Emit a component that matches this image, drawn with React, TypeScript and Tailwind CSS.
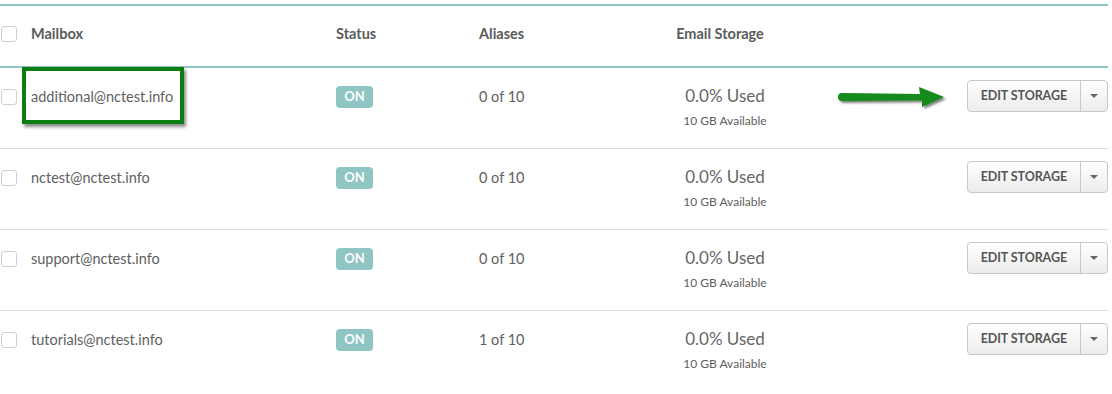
import React from 'react';

const mailboxes = [
  { email: 'additional@nctest.info', aliases: '0 of 10' },
  { email: 'nctest@nctest.info', aliases: '0 of 10' },
  { email: 'support@nctest.info', aliases: '0 of 10' },
  { email: 'tutorials@nctest.info', aliases: '1 of 10' },
];

const cols = 'grid grid-cols-[31px_305px_143px_166px_160px_1fr]';

const Checkbox: React.FC = () => (
  <span className="block w-[16px] h-[16px] ml-[1px] rounded-[3px] border border-[#cfcfcf] bg-white" />
);

const EditButton: React.FC = () => (
  <div className="flex h-[32px] rounded-[4px] border border-[#c8c8c8] bg-gradient-to-b from-white to-[#ececec] text-[#555]">
    <button className="px-[13px] text-[12.5px] font-bold tracking-[-0.1px] border-r border-[#c8c8c8]">
      EDIT STORAGE
    </button>
    <button className="w-[26px] flex items-center justify-center">
      <svg width="8" height="4" viewBox="0 0 8 4">
        <path d="M0 0h8L4 4z" fill="#666" />
      </svg>
    </button>
  </div>
);

export default function App() {
  return (
    <div className="w-[1112px] h-[394px] bg-white pt-[4px] pr-[4px] font-['Lato','Liberation_Sans',sans-serif] text-[#606060] relative">
      <div className="border-t-2 border-[#8fc5c1]">
        {/* Header */}
        <div className={`${cols} h-[62px] pb-[4px] items-center border-b-2 border-[#8fc5c1] text-[14.5px] font-bold text-[#5b5b5b]`}>
          <Checkbox />
          <span>Mailbox</span>
          <span>Status</span>
          <span>Aliases</span>
          <span className="text-center pr-[10px]">Email Storage</span>
          <span />
        </div>

        {/* Rows */}
        {mailboxes.map((m, i) => (
          <div
            key={m.email}
            className={`${cols} h-[81px] pt-[13px] ${i < mailboxes.length - 1 ? 'border-b border-[#dcdcdc]' : ''}`}
          >
            <div className="h-[32px] flex items-center"><Checkbox /></div>
            <div className="h-[32px] flex items-center text-[14.5px]">{m.email}</div>
            <div className="h-[32px] flex items-center">
              <span className="h-[22px] w-[37px] rounded-[4px] bg-[#8fc5c2] text-white text-[13px] font-bold flex items-center justify-center">
                ON
              </span>
            </div>
            <div className="h-[32px] flex items-center text-[14.5px]">{m.aliases}</div>
            <div className="flex flex-col items-center">
              <span className="h-[30px] flex items-center text-[17px] text-[#666]">0.0% Used</span>
              <span className="text-[12px] leading-[14px] mt-[3px]">10 GB Available</span>
            </div>
            <div className="flex justify-end -mt-[1px]">
              <EditButton />
            </div>
          </div>
        ))}
      </div>

      {/* Annotation: highlight box */}
      <div className="absolute left-[22px] top-[67px] w-[162px] h-[57px] border-[4px] border-[#0b7d12] shadow-[2px_3px_3px_rgba(0,0,0,0.45)] pointer-events-none" />

      {/* Annotation: arrow */}
      <svg className="absolute left-[834px] top-[84px]" width="118" height="28" viewBox="0 0 118 28">
        <defs>
          <filter id="sh" x="-10%" y="-30%" width="120%" height="170%">
            <feDropShadow dx="2" dy="2" stdDeviation="1.2" floodColor="#000" floodOpacity="0.5" />
          </filter>
        </defs>
        <g filter="url(#sh)" fill="#138a1a">
          <path d="M8 9 L86 10 L85 3 L110 13 L88 23 L88 16.5 L8 17 Q4 17 4 13 Q4 9 8 9Z" />
        </g>
      </svg>
    </div>
  );
}
